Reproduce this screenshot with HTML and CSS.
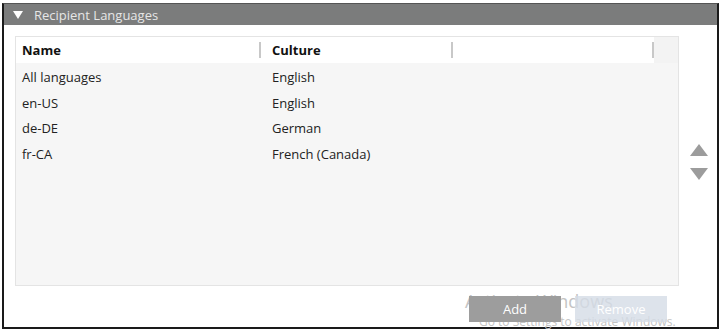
FILE: index.html
```html
<!DOCTYPE html>
<html lang="en">

<head>
  <meta charset="UTF-8">
  <title>Recipient Languages</title>
  <link rel="stylesheet" href="styles.css">
</head>

<body>
  <div class="panel">
    <div class="panel-header">
      <span class="caret"></span>
      <span class="title">Recipient Languages</span>
    </div>

    <div class="panel-body">
      <div class="grid-row">
        <div class="grid">
          <div class="grid-head">
            <div class="col col-name">Name</div>
            <div class="col col-culture">Culture</div>
            <div class="col col-extra"></div>
            <div class="col-end"></div>
          </div>
          <div class="grid-rows">
            <div class="row"><span class="col-name">All languages</span><span class="col-culture">English</span></div>
            <div class="row"><span class="col-name">en-US</span><span class="col-culture">English</span></div>
            <div class="row"><span class="col-name">de-DE</span><span class="col-culture">German</span></div>
            <div class="row"><span class="col-name">fr-CA</span><span class="col-culture">French (Canada)</span></div>
          </div>
        </div>

        <div class="order">
          <span class="arrow-up"></span>
          <span class="arrow-down"></span>
        </div>
      </div>

      <div class="buttons">
        <button class="btn btn-add">Add</button>
        <button class="btn btn-remove">Remove</button>
        <!-- windows watermark sits behind the buttons -->
        <div class="watermark">
          <div class="wm-big">Activate Windows</div>
          <div class="wm-small">Go to Settings to activate Windows.</div>
        </div>
      </div>
    </div>
  </div>
</body>

</html>
```

FILE: styles.css
```css
body {
  margin: 0;
  padding: 0;
  background: #fff;
  font-family: "Open Sans", "Noto Sans", sans-serif;
  overflow: hidden;
}

.panel {
  margin: 3px 0 0 2px;
  width: 713px;
  height: 323px;
  border: 2px solid #1a1a1a;
  border-top: 1px solid #555;
  display: flex;
  flex-direction: column;
}

.panel-header {
  height: 21px;
  background: #7b7c7c;
  display: flex;
  align-items: center;
  color: #e6e6e6;
  font-size: 13px;
}

.caret {
  width: 0;
  height: 0;
  margin: 1px 0 0 9px;
  border-left: 5px solid transparent;
  border-right: 5px solid transparent;
  border-top: 8px solid #fff;
}

.title {
  margin-left: 11px;
}

.panel-body {
  flex: 1;
  display: flex;
  flex-direction: column;
  padding: 11px 0 0 11px;
}

.grid-row {
  display: flex;
}

.grid {
  width: 662px;
  height: 248px;
  border: 1px solid #e4e4e4;
  background: #f6f6f6;
  font-size: 13px;
  color: #222;
}

.grid-head {
  height: 26px;
  background: #fff;
  display: flex;
  align-items: center;
  font-weight: bold;
  color: #111;
}

.grid-head .col {
  height: 16px;
  line-height: 16px;
  border-right: 2px solid #c8c8c8;
}

.grid-head .col-end {
  flex: 1;
  align-self: stretch;
  background: #f3f3f3;
}

.col-name {
  width: 237px;
  padding-left: 6px;
}

.col-culture {
  width: 179px;
  padding-left: 11px;
}

.col-extra {
  width: 199px;
}

.grid-rows {
  padding-top: 2px;
}

.row {
  display: flex;
  height: 25.5px;
  line-height: 25.5px;
}

.row .col-name {
  width: 239px;
}

.order {
  display: flex;
  flex-direction: column;
  align-items: center;
  gap: 12px;
  margin: 108px 0 0 11px;
}

.arrow-up {
  width: 0;
  height: 0;
  border-left: 9px solid transparent;
  border-right: 9px solid transparent;
  border-bottom: 12px solid #9c9c9c;
}

.arrow-down {
  width: 0;
  height: 0;
  border-left: 9px solid transparent;
  border-right: 9px solid transparent;
  border-top: 12px solid #9c9c9c;
}

.buttons {
  position: relative;
  display: flex;
  gap: 14px;
  margin: 10px 0 0 454px;
}

.btn {
  position: relative;
  z-index: 1;
  width: 92px;
  height: 26px;
  border: none;
  font-family: inherit;
  font-size: 13px;
  color: #fff;
}

.btn-add {
  background: #9d9d9d;
}

.btn-remove {
  background: rgba(212, 220, 230, 0.8);
}

.watermark {
  position: absolute;
  left: -4px;
  top: -6px;
  color: #c4c4c4;
  white-space: nowrap;
}

.wm-big {
  font-size: 18px;
  line-height: 22px;
}

.wm-small {
  font-size: 12px;
  line-height: 14px;
  padding: 3px 0 0 14px;
}
```
